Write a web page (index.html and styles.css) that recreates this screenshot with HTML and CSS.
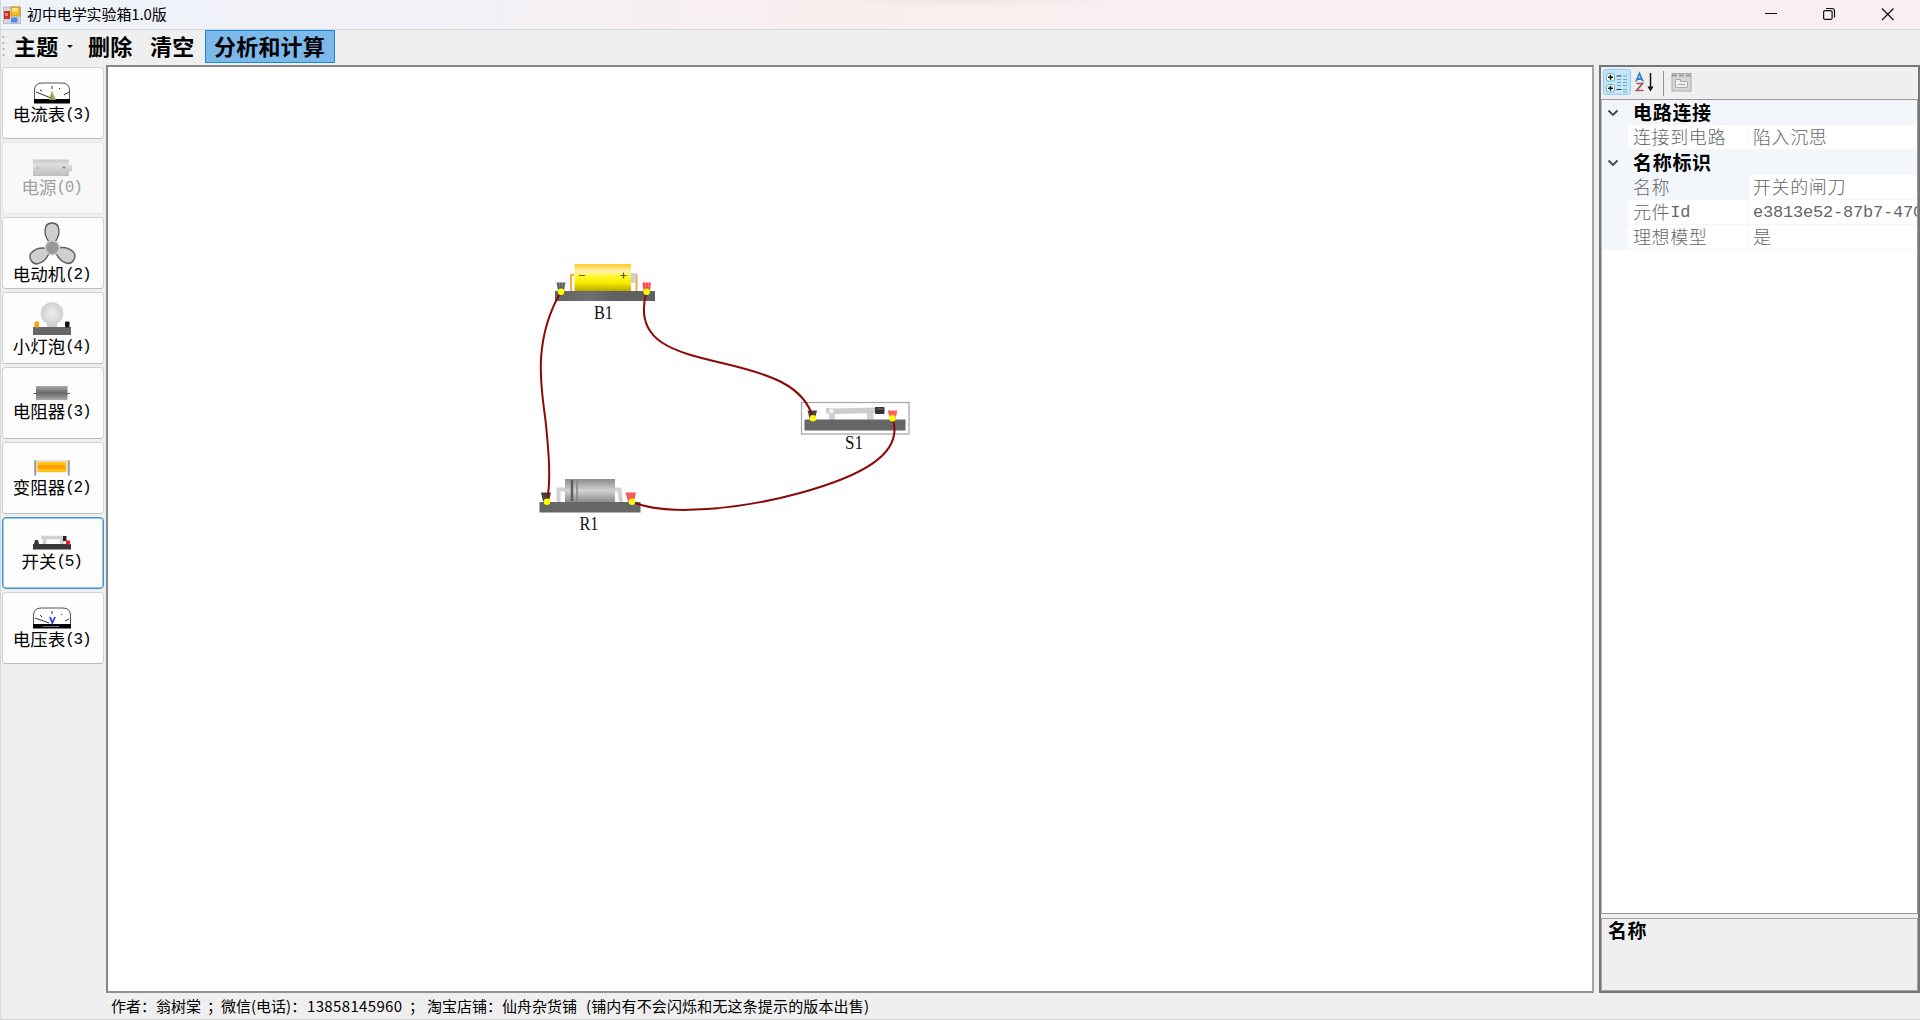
FILE: index.html
```html
<!DOCTYPE html>
<html lang="zh-CN">
<head>
<meta charset="utf-8">
<title>初中电学实验箱1.0版</title>
<link rel="stylesheet" href="styles.css">
</head>
<body>
<div class="window">
  <header class="titlebar">
    <svg class="app-icon" width="18" height="18" viewBox="0 0 18 18">
      <rect x=".5" y="1" width="17" height="16.500" fill="#d4d8de" stroke="#b9bec8"/>
      <rect x="1" y="5" width="6" height="8" fill="#c8342c"/><rect x="2" y="7" width="3" height="3" fill="#ee8178"/>
      <rect x="8" y="1" width="9" height="9" fill="#f5b922" stroke="#c98b16" stroke-width=".8"/><rect x="9" y="2" width="6" height="3.500" fill="#ffe48a"/>
      <rect x="8" y="11.500" width="6.500" height="5" fill="#4e8de8"/>
    </svg>
    <span class="title">初中电学实验箱1.0版</span>
    <svg class="controls" width="160" height="29" viewBox="1750 0 160 29" fill="none" stroke="#111" stroke-width="1.2">
      <path d="M1765 13.500h12M1882 8.500l11.500 11.500M1893.500 8.500L1882 20"/>
      <rect x="1823.600" y="10.600" width="8.500" height="8.800" rx="1.500"/>
      <path d="M1826 8.500h6a2.500 2.500 0 0 1 2.500 2.500v6.500"/>
    </svg>
  </header>

  <nav class="toolbar">
    <i class="grip"></i>
    <span class="tool theme">主题<i class="caret"></i></span>
    <span class="tool delete">删除</span>
    <span class="tool clear">清空</span>
    <span class="tool analyse">分析和计算</span>
  </nav>

  <main class="body">
    <aside class="parts">
      <div class="part">
        <svg width="99" height="36" viewBox="3 0 99 36">
          <path d="M34.500 34V22q0-7 8-7h19q8 0 8 7v12" fill="#fff" stroke="#555"/>
          <rect x="34" y="31" width="36" height="4.500" fill="#000"/>
          <path d="M36 24l15 6M64 27l5-3M40 22l2 1M52 18v3M59 21l1-1" stroke="#333"/>
          <path d="M49 32l3-9 4 9z" fill="#7d9c4a"/><path d="M52 23l1.500 8" stroke="#dcb653"/>
        </svg>
        <span>电流表<b>(3)</b></span>
      </div>
      <div class="part disabled">
        <svg width="99" height="34" viewBox="3 0 99 34">
          <defs><linearGradient id="cell" x2="0" y2="1"><stop stop-color="#c9c9c9"/><stop offset=".3" stop-color="#dedede"/><stop offset="1" stop-color="#bcbcbc"/></linearGradient></defs>
          <path d="M33 16.500h36v5h3v7h-3v4.500H33z" fill="url(#cell)"/>
          <path d="M37 25h2M62.500 24.500h3M64 23v3" stroke="#8a8a8a"/>
        </svg>
        <span>电源<b>(0)</b></span>
      </div>
      <div class="part">
        <svg width="99" height="46" viewBox="3 0 99 46">
          <g fill="#cfcfcf" stroke="#5d5d5d" stroke-width="1.400">
            <path d="M49 24q-6-8-3-16 2-3 6-3t6 3q3 8-3 16z"/>
            <path d="M49 24q-6-8-3-16 2-3 6-3t6 3q3 8-3 16z" transform="rotate(120 52.300 29.700)"/>
            <path d="M49 24q-6-8-3-16 2-3 6-3t6 3q3 8-3 16z" transform="rotate(240 52.300 29.700)"/>
          </g>
          <circle cx="52.300" cy="29.700" r="7.800" fill="#cfcfcf"/><circle cx="52.300" cy="29.700" r="6.300" fill="#999"/>
        </svg>
        <span>电动机<b>(2)</b></span>
      </div>
      <div class="part">
        <svg width="99" height="43" viewBox="3 0 99 43">
          <defs><radialGradient id="glass"><stop stop-color="#efefef"/><stop offset="1" stop-color="#cfcfcf"/></radialGradient></defs>
          <path d="M47 28h10v6H47z" fill="#cdcdcd"/><circle cx="52" cy="20.500" r="11.300" fill="url(#glass)"/>
          <path d="M33 34h38v8H33z" fill="#666"/><rect x="34.500" y="28.500" width="4.500" height="6" rx="1" fill="#ff9c0b"/><rect x="65" y="28.500" width="4.500" height="6" rx="1" fill="#111"/>
        </svg>
        <span>小灯泡<b>(4)</b></span>
      </div>
      <div class="part">
        <svg width="99" height="33" viewBox="3 0 99 33">
          <defs><linearGradient id="tube" x2="0" y2="1"><stop stop-color="#aaa"/><stop offset=".5" stop-color="#686868"/><stop offset="1" stop-color="#aaa"/></linearGradient></defs>
          <path d="M33.500 25.500H70" stroke="#555"/><rect x="36" y="18" width="31.500" height="14" fill="url(#tube)"/>
        </svg>
        <span>电阻器<b>(3)</b></span>
      </div>
      <div class="part">
        <svg width="99" height="34" viewBox="3 0 99 34">
          <rect x="34" y="17" width="36" height="12.500" fill="#e6e0d0"/><path d="M35.200 17.500v15M68.800 17.500v15" stroke="#999" stroke-width="1.800"/>
          <rect x="37.500" y="19" width="28.500" height="10" fill="#ffc414"/><rect x="38" y="22" width="27" height="4" fill="#ff9f00"/>
        </svg>
        <span>变阻器<b>(2)</b></span>
      </div>
      <div class="part focused">
        <svg width="99" height="33" viewBox="3 0 99 33">
          <path d="M41 19.500h23M44.500 20v6M62 20v6" stroke="#cfcfcf" stroke-width="3.500" fill="none"/>
          <path d="M34 26l1-4h3l1 4h32v5.500H33V26z" fill="#383838"/><rect x="63" y="18" width="3.500" height="5" fill="#222"/><rect x="66" y="22.500" width="4" height="4" fill="#f01818"/>
        </svg>
        <span>开关<b>(5)</b></span>
      </div>
      <div class="part">
        <svg width="99" height="36" viewBox="3 0 99 36">
          <path d="M33.500 34V22q0-7 8-7h21q8 0 8 7v12" fill="#fff" stroke="#555"/>
          <rect x="33" y="31" width="38" height="4.500" fill="#000"/>
          <path d="M35 25l14 5M65 28l4-2M40 22l2 2M52 18v3M61 22l1-1" stroke="#333"/>
          <path d="M50 24l2.300 6L55 24" fill="none" stroke="#3434ff" stroke-width="1.800"/><path d="M43 33.500h16" stroke="#668" />
        </svg>
        <span>电压表<b>(3)</b></span>
      </div>
    </aside>

    <section class="canvas">
      <svg width="1484" height="924" viewBox="108 67 1484 924">
        <defs>
          <linearGradient id="battery" x2="0" y2="1"><stop stop-color="#ffc928"/><stop offset=".1" stop-color="#ffd95a"/><stop offset=".27" stop-color="#fff3b0"/><stop offset=".5" stop-color="#fff51c"/><stop offset=".72" stop-color="#f3ea00"/><stop offset="1" stop-color="#b8a800"/></linearGradient>
          <linearGradient id="resistor" x2="0" y2="1"><stop stop-color="#8c8c8c"/><stop offset=".2" stop-color="#a6a6a6"/><stop offset=".5" stop-color="#d2d2d2"/><stop offset="1" stop-color="#8b8b8b"/></linearGradient>
          <linearGradient id="base"><stop stop-color="#606060"/><stop offset=".35" stop-color="#707070"/><stop offset=".6" stop-color="#606060"/></linearGradient>
        </defs>
        <g>
          <path d="M574 275h-3v16M632 275h4.500v16" fill="none" stroke="#ffa34d" stroke-width="2"/>
          <rect x="631" y="273" width="5" height="10" fill="#cfcfcf"/>
          <rect x="574.500" y="264" width="56.500" height="27" fill="url(#battery)"/>
          <path d="M579 275.500h6M620.500 275.500h6M623.500 272.500v6" stroke="#5d5a10" stroke-width="1.200"/>
          <rect x="555" y="291" width="100" height="10" fill="url(#base)"/>
          <path d="M556.500 282.500h9l-1.500 8.500h-6z" fill="#626262"/><path d="M559.500 283v4M562.500 283v4" stroke="#888" stroke-width=".8"/>
          <path d="M642.500 282.500h8.500l-1 8.500h-6.500z" fill="#ff4c50"/><path d="M645.500 283v4M648.500 283v4" stroke="#ff8b8b" stroke-width=".8"/>
        </g>
        <g>
          <path d="M558.500 502v-12.500h8M613 489.500h6.500l1.500 12.500" fill="none" stroke="#d1d1d1" stroke-width="4"/>
          <rect x="565" y="479" width="50" height="23" fill="url(#resistor)"/><path d="M572 480v21" stroke="#5e5e5e" stroke-width="2.500"/><path d="M577 480v21" stroke="#858585" stroke-width="1.500"/>
          <rect x="539.500" y="502" width="101" height="10.500" fill="#666"/>
          <path d="M541 492.500h10l-2 9h-6z" fill="#454545"/><path d="M625.500 492.500h10.500l-2 9h-6z" fill="#ff5558"/><path d="M629 493v4M632.500 493v4" stroke="#d97575" stroke-width=".7"/>
        </g>
        <g>
          <rect x="801.500" y="402.500" width="107.500" height="31.500" fill="none" stroke="#aaa" stroke-width="1.300"/>
          <path d="M829 413h6v6.500h-6zM867 412h6.500v7.500H867z" fill="#cfcfcf"/>
          <path d="M826 408l10 .5 40-1v5.500l-40 1-10-.5z" fill="#ccc"/><circle cx="831.500" cy="411" r="2.300" fill="#f4f4f4"/>
          <rect x="875" y="407" width="9.500" height="7" rx="1" fill="#333"/><path d="M877 409h6" stroke="#777"/>
          <rect x="804.500" y="419.500" width="101" height="11" fill="#666"/>
          <path d="M807.500 410.500h9.500l-2 8h-5.500z" fill="#454545"/><path d="M887.500 410.500h10l-2 8H890z" fill="#ff6062"/>
        </g>
        <g fill="none" stroke="#8b0909" stroke-width="2">
          <path d="M561 291.500C530 345 543 395 546 425S551 480 547 501.500"/>
          <path d="M646.700 291.500C632 342 675 352 722 363S804 385 813 418"/>
          <path d="M892.500 418C905 455 858 477 800 493S665 517 632 501.500"/>
        </g>
        <g fill="#ffff00">
          <circle cx="561" cy="291.700" r="3.200"/><circle cx="646.700" cy="291.700" r="3.200"/><circle cx="547" cy="501.700" r="3.200"/>
          <circle cx="632" cy="501.700" r="3.200"/><circle cx="813" cy="418.300" r="3.200"/><circle cx="892.500" cy="418.300" r="3.200"/>
        </g>
        <g class="names">
          <text x="594" y="319" textLength="19" lengthAdjust="spacingAndGlyphs">B1</text>
          <text x="579.500" y="530" textLength="19" lengthAdjust="spacingAndGlyphs">R1</text>
          <text x="845" y="449" textLength="18" lengthAdjust="spacingAndGlyphs">S1</text>
        </g>
      </svg>
    </section>

    <aside class="inspector">
      <div class="inspector-tools">
        <svg width="110" height="31" viewBox="1601 67 110 31">
          <rect x="1603.500" y="69.500" width="27" height="25" rx="2" fill="#c5e5fb" stroke="#91cdf8"/>
          <g fill="#fff" stroke="#52bdb5"><rect x="1606.500" y="73.500" width="8" height="7.500" rx="2"/><rect x="1606.500" y="84.500" width="8" height="7.500" rx="2"/></g>
          <path d="M1608 77.300h5M1610.500 74.800v5M1608 88.300h5M1610.500 85.800v5" stroke="#111" stroke-width="1.500"/>
          <path d="M1616.500 76h5M1616.500 89.500h5" stroke="#333"/>
          <path d="M1617 79.500h4M1617 82.500h4M1617 85.500h4M1623 76h4M1623 79.500h4M1623 82.500h4M1623 85.500h4M1623 89.500h4M1623 92h4" stroke="#68abbd"/>
          <path d="M1636 81.500l3.500-8 3.500 8M1637.500 79h4.500" fill="none" stroke="#397fd2" stroke-width="1.800"/>
          <path d="M1636.500 83.500h6l-6 7h7" fill="none" stroke="#a45555" stroke-width="1.700"/>
          <path d="M1650.500 73v15" stroke="#111" stroke-width="1.500"/><path d="M1647.500 86.500h6l-3 5z" fill="#111"/>
          <path d="M1663.500 71v25" stroke="#929292"/>
          <rect x="1672" y="73.500" width="19" height="17.500" fill="#d6d6d6" stroke="#aaa"/><path d="M1672 75.500h19" stroke="#999" stroke-width="2" stroke-dasharray="5 2"/>
          <path d="M1675.500 87.500v-8h5v2h7v6z" fill="#efefef" stroke="#aaa"/><path d="M1678 84.500h7" stroke="#aaa"/>
        </svg>
      </div>
      <div class="grid">
        <div class="cat"><svg width="12" height="8" viewBox="0 0 12 8"><path d="M1.500 1.500L6 6l4.500-4.500"/></svg><strong>电路连接</strong></div>
        <div class="prop"><span>连接到电路</span><span>陷入沉思</span></div>
        <div class="cat"><svg width="12" height="8" viewBox="0 0 12 8"><path d="M1.500 1.500L6 6l4.500-4.500"/></svg><strong>名称标识</strong></div>
        <div class="prop current"><span>名称</span><span>开关的闸刀</span></div>
        <div class="prop"><span>元件<b>Id</b></span><span><b>e3813e52-87b7-470</b></span></div>
        <div class="prop"><span>理想模型</span><span>是</span></div>
      </div>
      <div class="description">名称</div>
    </aside>
  </main>

  <footer class="status">
    <span class="s1">作者：</span><span class="s2">翁树棠</span><span class="s3">；</span><span class="s4">微信(电话)：</span><span class="s5">13858145960</span><span class="s6">；</span><span class="s7">淘宝店铺：</span><span class="s8">仙舟杂货铺</span><span class="s9">(铺内有不会闪烁和无这条提示的版本出售)</span>
  </footer>
</div>
</body>
</html>
```
FILE: styles.css
```css
* { box-sizing: border-box; }
body { margin: 0; font-family: "Noto Sans CJK SC", sans-serif; color: #000; overflow: hidden; }
svg { display: block; flex: none; overflow: visible; }
.window { width: 1920px; height: 1020px; display: flex; flex-direction: column; background: #efefef; border-left: 1px solid #d8d8d8; border-bottom: 1px solid #d0d0d0; }

.titlebar { height: 30px; flex: none; display: flex; align-items: center; padding-left: 2px; border-bottom: 1px solid #d5d7da; background: radial-gradient(ellipse 160px 7px at 959px 0, #f1e5e4, transparent), linear-gradient(90deg, #eef3fa, #f2f1f7 22%, #f9eeee 43%, #f9efee 52%, #f9eff2 60%); }
.title { margin-left: 6px; font-size: 15px; line-height: 26px; padding-bottom: 2px; letter-spacing: -.1px; }
.controls { margin-left: auto; margin-right: 10px; }

.toolbar { height: 35px; flex: none; display: flex; }
.grip { width: 3px; height: 24px; margin: 4px 0 0 1px; background: radial-gradient(circle, #bcbcbc 1px, transparent 1.300px) 0 0 / 3px 6px; }
.tool { display: flex; align-items: center; height: 33px; padding-bottom: 4px; font-size: 22px; font-weight: 700; line-height: 28px; letter-spacing: .2px; white-space: nowrap; }
.theme { width: 77px; padding-left: 9px; }
.caret { margin: 3px 0 0 9px; border: 3.500px solid transparent; border-top-color: #111; border-bottom: 0; }
.delete { width: 62px; padding-left: 6px; }
.clear { width: 61px; padding-left: 6px; }
.analyse { width: 130px; padding-left: 8px; background: #7cb9ea; border: 1px solid #1689df; }

.body { height: 928px; flex: none; display: flex; }
.parts { width: 105px; flex: none; display: flex; flex-direction: column; gap: 3px; padding: 2px 0 0 1px; }
.part { width: 102px; height: 72px; display: flex; flex-direction: column; border: 1px solid #d2d2d2; border-bottom-color: #bdbdbd; border-radius: 4px; background: #fdfdfd; }
.part span { height: 20px; display: flex; justify-content: center; align-items: center; font-size: 17.500px; line-height: 20px; padding-right: 3px; }
.part b { padding-top: 2px; font: 16px/20px "Liberation Mono", monospace; letter-spacing: -1.300px; }
.disabled { border-color: #e7e7e7; background: #f8f8f8; color: #a0a0a0; }
.focused { border-color: #3d94d4; box-shadow: inset 0 0 0 .5px #3d94d4; }

.canvas { width: 1488px; flex: none; border: 2px solid; border-color: #858585 #a5a5a5 #929292 #858585; background: #fff; }
.names { font: 19px "Liberation Serif", serif; fill: #111; }

.inspector { width: 321px; flex: none; display: flex; flex-direction: column; margin-left: 5px; border: 2px solid #777; }
.inspector-tools { height: 32px; flex: none; }
.grid { height: 815px; flex: none; border: 1px solid #999; border-left-color: #bbb; background: #fff; overflow: hidden; }
.cat { height: 25px; display: flex; align-items: center; padding-left: 5px; background: #f3f6fb; }
.cat path { fill: none; stroke: #444; stroke-width: 1.800; }
.cat strong { margin-left: 14px; padding-bottom: 2px; font-size: 19px; line-height: 22px; letter-spacing: .7px; }
.prop { height: 25px; display: grid; grid-template-columns: 120px 1fr; gap: 1px; padding-left: 26px; border-bottom: 1px solid #f3f6fb; background: #f3f6fb; font-size: 18px; line-height: 22px; letter-spacing: .6px; color: #666; font-weight: 300; }
.prop span { height: 24px; display: flex; padding-left: 5px; background: #fff; overflow: hidden; white-space: nowrap; }
.prop span:last-child { padding-left: 4px; }
.prop b { padding-top: 1px; font: 17px/24px "Liberation Mono", monospace; letter-spacing: -.2px; }
.prop.current span:first-child { background: #f3f6fb; }
.description { flex: 1; margin-top: 4px; border: 1px solid #a5a5a5; padding-left: 6px; font-size: 19px; line-height: 22px; letter-spacing: .4px; font-weight: 700; }

.status { flex: 1; display: flex; align-items: center; padding-left: 110px; font-size: 15px; line-height: 26px; white-space: nowrap; }
.status span { flex: none; }
.s1 { width: 45px; }
.s2 { width: 51px; }
.s3 { width: 14px; }
.s4 { width: 86px; }
.s5 { width: 102px; letter-spacing: .35px; }
.s6 { width: 18px; }
.s7 { width: 75px; }
.s8 { width: 84px; }
.s9 { letter-spacing: .15px; }
```
